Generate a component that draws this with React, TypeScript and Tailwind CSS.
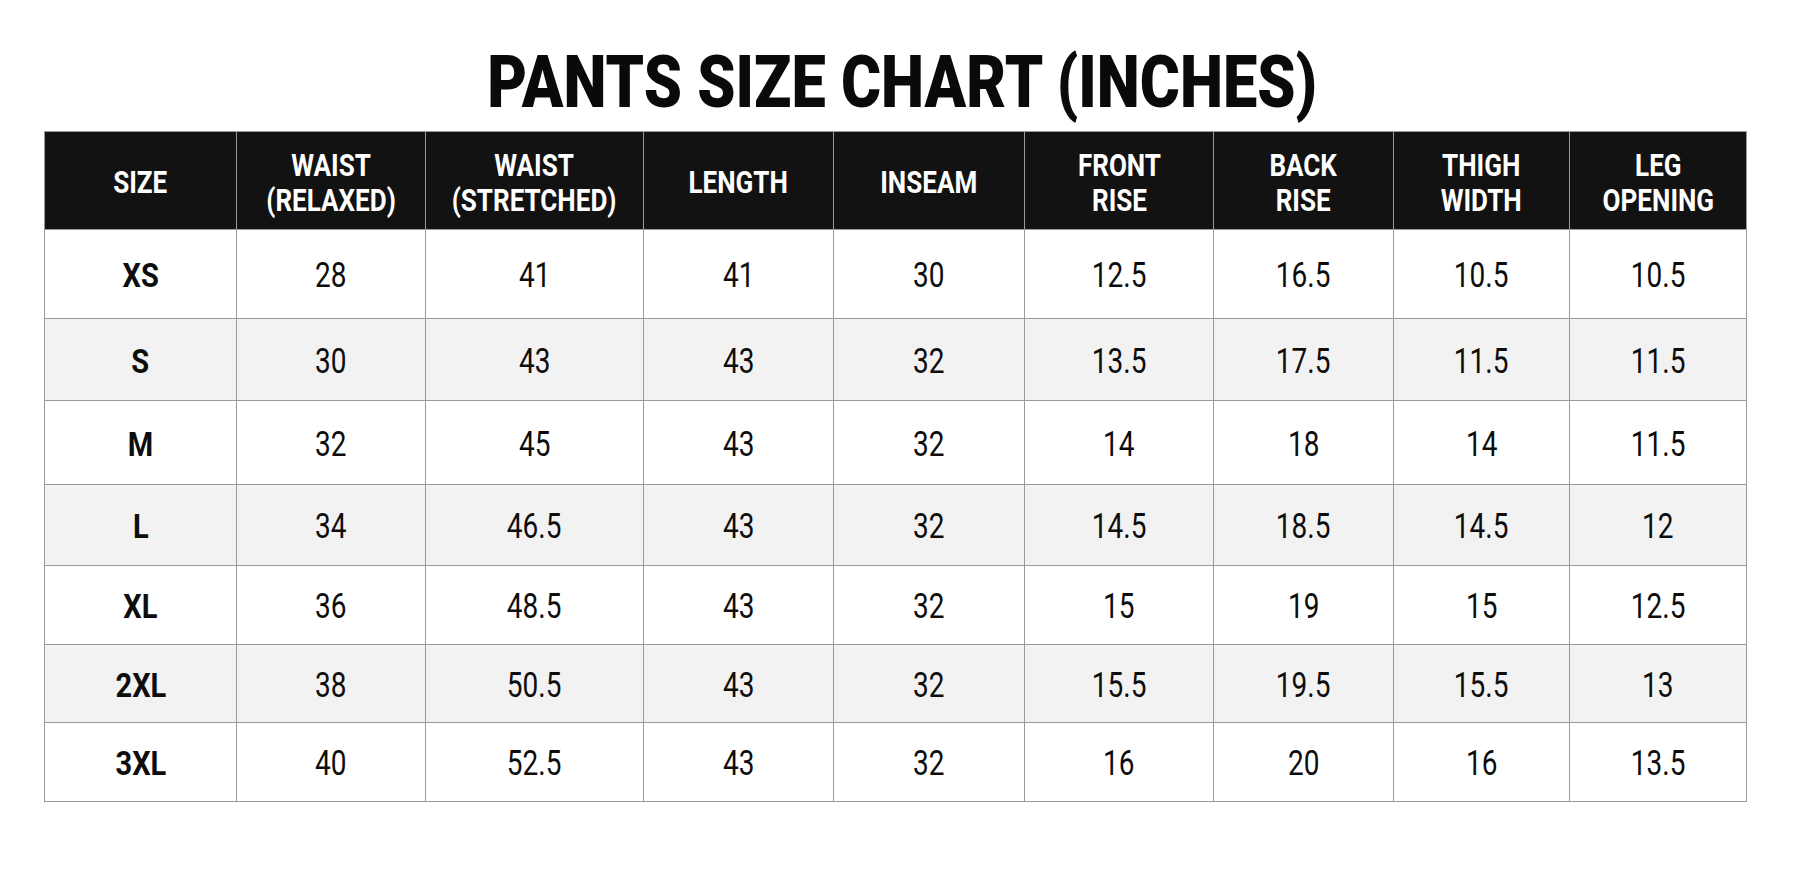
import React from "react";

const cols = [192, 189, 218, 190, 191, 189, 180, 176, 177];
const headers: string[][] = [
  ["SIZE"],
  ["WAIST", "(RELAXED)"],
  ["WAIST", "(STRETCHED)"],
  ["LENGTH"],
  ["INSEAM"],
  ["FRONT", "RISE"],
  ["BACK", "RISE"],
  ["THIGH", "WIDTH"],
  ["LEG", "OPENING"],
];
const rows: string[][] = [
  ["XS", "28", "41", "41", "30", "12.5", "16.5", "10.5", "10.5"],
  ["S", "30", "43", "43", "32", "13.5", "17.5", "11.5", "11.5"],
  ["M", "32", "45", "43", "32", "14", "18", "14", "11.5"],
  ["L", "34", "46.5", "43", "32", "14.5", "18.5", "14.5", "12"],
  ["XL", "36", "48.5", "43", "32", "15", "19", "15", "12.5"],
  ["2XL", "38", "50.5", "43", "32", "15.5", "19.5", "15.5", "13"],
  ["3XL", "40", "52.5", "43", "32", "16", "20", "16", "13.5"],
];
const rowH = [89, 82, 84, 81, 79, 78, 79];

export default function App() {
  return (
    <div className="min-h-[872px] w-[1804px] bg-white" style={{ fontFamily: "Roboto, 'Liberation Sans', sans-serif" }}>
      <div className="h-[131px] pt-[48px] text-center">
        <span className="inline-block scale-x-[0.85] text-[72px] font-black leading-[70px] text-[#0a0a0a]">
          PANTS SIZE CHART (INCHES)
        </span>
      </div>
      <div className="pl-[44px]">
        <table className="table-fixed border-collapse">
          <colgroup>
            {cols.map((w, i) => (
              <col key={i} style={{ width: w }} />
            ))}
          </colgroup>
          <thead>
            <tr className="h-[98px] bg-[#121212]">
              {headers.map((h, i) => (
                <th key={i} className="border border-[#9a9a9a] p-0 align-middle text-center font-bold text-white">
                  <span className="inline-block scale-x-[0.84] text-[31px] leading-[35px] pt-[4px]">
                    {h.map((l, j) => (
                      <span key={j} className="block whitespace-nowrap">
                        {l}
                      </span>
                    ))}
                  </span>
                </th>
              ))}
            </tr>
          </thead>
          <tbody>
            {rows.map((r, i) => (
              <tr key={i} className={i % 2 === 1 ? "bg-[#f2f2f2]" : "bg-white"} style={{ height: rowH[i] }}>
                {r.map((c, j) => (
                  <td key={j} className="border border-[#9a9a9a] p-0 pt-[4px] text-center align-middle text-[#0d0d0d]">
                    <span
                      className={
                        j === 0
                          ? "inline-block scale-x-[0.88] text-[33px] font-bold leading-[36px]"
                          : "inline-block scale-x-[0.8] text-[35px] font-normal leading-[36px]"
                      }
                    >
                      {c}
                    </span>
                  </td>
                ))}
              </tr>
            ))}
          </tbody>
        </table>
      </div>
    </div>
  );
}
